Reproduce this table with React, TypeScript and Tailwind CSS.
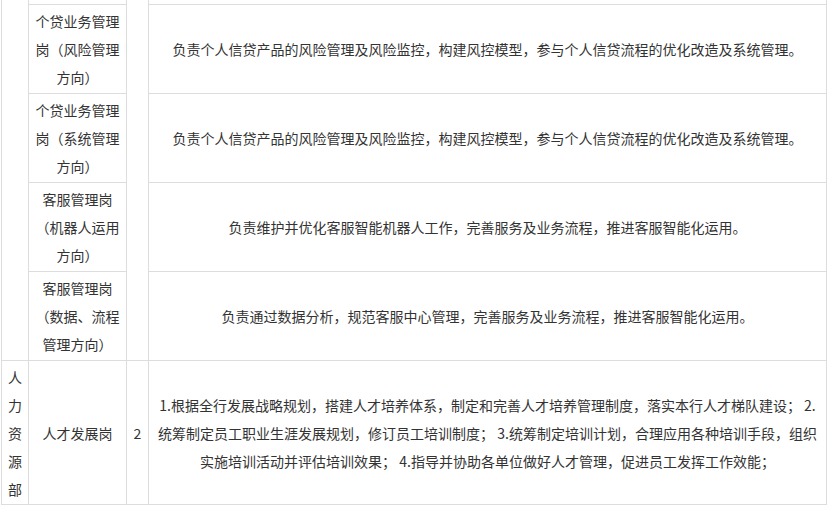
import React from "react";

const cell =
  "border-r border-b border-[#dddddd] flex items-center justify-center text-center";

export default function App() {
  const font = {
    fontFamily: '"Noto Sans CJK SC", "Noto Sans", sans-serif',
  } as React.CSSProperties;
  return (
    <div
      className="w-[830px] h-[507px] bg-white overflow-hidden text-[14px] leading-[28px] text-[#333333]"
      style={font}
    >
      <div className="ml-px w-[826px] border-l border-[#dddddd] grid grid-cols-[27px_98px_22px_678px] grid-rows-[5px_89px_89px_89px_89px_144px]">
        {/* column 1 merged (department above) */}
        <div className={`${cell} row-start-1 row-span-5 col-start-1`}></div>
        {/* column 3 merged (count above) */}
        <div className={`${cell} row-start-1 row-span-5 col-start-3`}></div>

        {/* cut-off row */}
        <div className={`${cell} row-start-1 col-start-2`}></div>
        <div className={`${cell} row-start-1 col-start-4`}></div>

        {/* row 1 */}
        <div className={`${cell} row-start-2 col-start-2 whitespace-nowrap`}>
          <div>
            个贷业务管理
            <br />
            岗（风险管理
            <br />
            方向）
          </div>
        </div>
        <div className={`${cell} row-start-2 col-start-4 whitespace-nowrap`}>
          负责个人信贷产品的风险管理及风险监控，构建风控模型，参与个人信贷流程的优化改造及系统管理。
        </div>

        {/* row 2 */}
        <div className={`${cell} row-start-3 col-start-2 whitespace-nowrap`}>
          <div>
            个贷业务管理
            <br />
            岗（系统管理
            <br />
            方向）
          </div>
        </div>
        <div className={`${cell} row-start-3 col-start-4 whitespace-nowrap`}>
          负责个人信贷产品的风险管理及风险监控，构建风控模型，参与个人信贷流程的优化改造及系统管理。
        </div>

        {/* row 3 */}
        <div className={`${cell} row-start-4 col-start-2 whitespace-nowrap`}>
          <div>
            客服管理岗
            <br />
            （机器人运用
            <br />
            方向）
          </div>
        </div>
        <div className={`${cell} row-start-4 col-start-4 whitespace-nowrap`}>
          负责维护并优化客服智能机器人工作，完善服务及业务流程，推进客服智能化运用。
        </div>

        {/* row 4 */}
        <div className={`${cell} row-start-5 col-start-2 whitespace-nowrap`}>
          <div>
            客服管理岗
            <br />
            （数据、流程
            <br />
            管理方向）
          </div>
        </div>
        <div className={`${cell} row-start-5 col-start-4 whitespace-nowrap`}>
          负责通过数据分析，规范客服中心管理，完善服务及业务流程，推进客服智能化运用。
        </div>

        {/* row 5 */}
        <div className={`${cell} row-start-6 col-start-1`}>
          <div>
            人<br />力<br />资<br />源<br />部
          </div>
        </div>
        <div className={`${cell} row-start-6 col-start-2 whitespace-nowrap`}>
          人才发展岗
        </div>
        <div className={`${cell} row-start-6 col-start-3`}>2</div>
        <div className={`${cell} row-start-6 col-start-4 whitespace-nowrap`}>
          <div>
            1.根据全行发展战略规划，搭建人才培养体系，制定和完善人才培养管理制度，落实本行人才梯队建设； 2.
            <br />
            统筹制定员工职业生涯发展规划，修订员工培训制度； 3.统筹制定培训计划，合理应用各种培训手段，组织
            <br />
            实施培训活动并评估培训效果； 4.指导并协助各单位做好人才管理，促进员工发挥工作效能；
          </div>
        </div>
      </div>
    </div>
  );
}
